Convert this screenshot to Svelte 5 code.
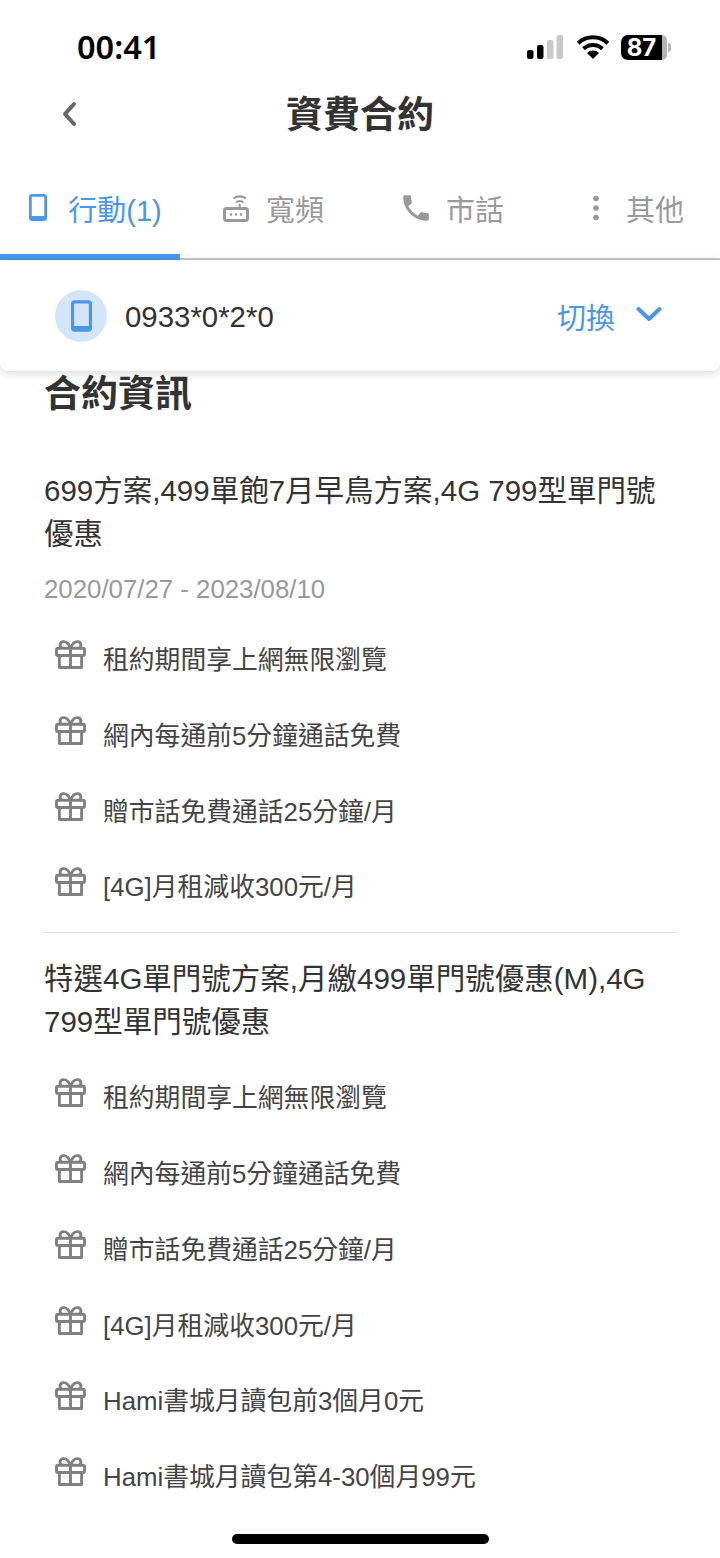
<script>
    const tabs = [
        { key: "mobile", label: "行動(1)", active: true },
        { key: "router", label: "寬頻" },
        { key: "phone", label: "市話" },
        { key: "more", label: "其他" },
    ];

    const base = ["租約期間享上網無限瀏覽", "網內每通前5分鐘通話免費", "贈市話免費通話25分鐘/月", "[4G]月租減收300元/月"];

    const plans = [
        {
            title: "699方案,499單飽7月早鳥方案,4G 799型單門號優惠",
            date: "2020/07/27 - 2023/08/10",
            perks: base,
        },
        {
            title: "特選4G單門號方案,月繳499單門號優惠(M),4G 799型單門號優惠",
            perks: [...base, "Hami書城月讀包前3個月0元", "Hami書城月讀包第4-30個月99元"],
        },
    ];
</script>

{#snippet handset(cls)}
    <svg class={cls} viewBox="0 0 20 30" aria-hidden="true">
        <rect x="1.5" y="1.5" width="17" height="27" rx="2" fill="none" stroke="currentColor" stroke-width="3" />
        <rect x="1.5" y="24.5" width="17" height="4" fill="currentColor" />
    </svg>
{/snippet}

<div class="page">
    <div class="status">
        <span class="time">00:41</span>
        <div class="status-icons">
            <svg class="signal" viewBox="0 0 36 24" aria-hidden="true">
                <rect x="0" y="15" width="6.5" height="9" rx="2" fill="#000" />
                <rect x="10" y="10" width="6.5" height="14" rx="2" fill="#000" />
                <rect x="20" y="5" width="6.5" height="19" rx="2" fill="#c9c9c9" />
                <rect x="29.5" y="0" width="6.5" height="24" rx="2" fill="#c9c9c9" />
            </svg>
            <svg class="wifi" viewBox="0 0 32 24" aria-hidden="true">
                <path d="M1.2 8.2a21.5 21.5 0 0 1 29.6 0" fill="none" stroke="#000" stroke-width="4" />
                <path d="M6.6 13.8a13.6 13.6 0 0 1 18.8 0" fill="none" stroke="#000" stroke-width="4" />
                <path d="M16 24l-6-6a8.500 8.500 0 0 1 12 0z" fill="#000" />
            </svg>
            <div class="battery">
                <span class="battery-level">87</span>
                <span class="battery-rest"></span>
                <span class="battery-cap"></span>
            </div>
        </div>
    </div>

    <header class="nav">
        <svg class="back" viewBox="0 0 16 26" aria-hidden="true">
            <path d="M13 3L4 13l9 10" fill="none" stroke="#666" stroke-width="4" stroke-linecap="round" stroke-linejoin="round" />
        </svg>
        <h1>資費合約</h1>
    </header>

    <nav class="tabs">
        {#each tabs as tab}
            <div class="tab" class:active={tab.active}>
                <span class="icon-box">
                    {#if tab.key === "mobile"}
                        {@render handset("mobile-icon")}
                    {:else if tab.key === "router"}
                        <svg class="router" viewBox="0 0 26 28" aria-hidden="true">
                            <path d="M13 8.500a5.500 5.500 0 0 1 7.500 0M10.500 4.500a10 10 0 0 1 12.500 0" fill="none" stroke="currentColor" stroke-width="2.200" />
                            <path d="M16.700 10v5" stroke="currentColor" stroke-width="2.200" />
                            <rect x="1.500" y="14.500" width="23" height="12" rx="2" fill="none" stroke="currentColor" stroke-width="3" />
                            <circle cx="8" cy="20.500" r="1.300" fill="currentColor" />
                            <circle cx="13" cy="20.500" r="1.300" fill="currentColor" />
                            <circle cx="18" cy="20.500" r="1.300" fill="currentColor" />
                        </svg>
                    {:else if tab.key === "phone"}
                        <svg class="phone" viewBox="0 0 24 24" aria-hidden="true">
                            <path fill="currentColor" d="M6.6 10.8c1.4 2.8 3.8 5.100 6.600 6.600l2.200-2.200c.3-.3.700-.4 1-.2 1.100.4 2.300.6 3.600.6.600 0 1 .4 1 1V20c0 .6-.4 1-1 1C10.600 21 3 13.400 3 4c0-.6.4-1 1-1h3.500c.6 0 1 .4 1 1 0 1.300.2 2.500.6 3.600.1.300 0 .7-.2 1z" />
                        </svg>
                    {:else}
                        <svg class="more" viewBox="0 0 8 28" aria-hidden="true">
                            <circle cx="4" cy="4.500" r="2.800" fill="currentColor" />
                            <circle cx="4" cy="14" r="2.800" fill="currentColor" />
                            <circle cx="4" cy="23.500" r="2.800" fill="currentColor" />
                        </svg>
                    {/if}
                </span>
                <span>{tab.label}</span>
            </div>
        {/each}
    </nav>

    <div class="switcher">
        <div class="avatar">{@render handset("avatar-icon")}</div>
        <span class="number">0933*0*2*0</span>
        <span class="switch-label">切換</span>
        <svg class="chevron" viewBox="0 0 26 16" aria-hidden="true">
            <path d="M2.500 3L13 13 23.500 3" fill="none" stroke="#4a96e8" stroke-width="4" stroke-linecap="round" stroke-linejoin="round" />
        </svg>
    </div>

    <main class="content">
        <h2>合約資訊</h2>
        {#each plans as plan, i}
            <section class="plan" class:rule={i > 0}>
                <p class="plan-title">{plan.title}</p>
                {#if plan.date}
                    <p class="plan-date">{plan.date}</p>
                {/if}
                <ul>
                    {#each plan.perks as perk}
                        <li>
                            <svg class="gift" viewBox="0 0 32 30" aria-hidden="true">
                                <g fill="none" stroke="#808080" stroke-width="3" stroke-linejoin="round">
                                    <path d="M16 8.500C14 3 11 1.500 8.500 1.700 5 2 4 6.500 7 8.500M16 8.500C18 3 21 1.500 23.500 1.700c3.500.3 4.500 4.800 1.500 6.800" />
                                    <rect x="1.500" y="8.500" width="29" height="7.500" rx="1.500" />
                                    <path d="M4.500 16V28.500H27.500V16M16 8.500V28.500" />
                                </g>
                            </svg>
                            <span>{perk}</span>
                        </li>
                    {/each}
                </ul>
            </section>
        {/each}
    </main>

    <div class="home-bar"></div>
</div>

<style>
    :global(body) {
        margin: 0;
        background: #fff;
    }
    .page {
        position: relative;
        width: 720px;
        height: 1558px;
        overflow: hidden;
        background: #fff;
        font-family: "Liberation Sans", "Noto Sans CJK TC", sans-serif;
        color: #333;
    }
    .status {
        height: 78px;
        display: flex;
        justify-content: space-between;
        align-items: center;
        padding: 16px 49px 0 77px;
        box-sizing: border-box;
    }
    .time {
        font-family: "Noto Sans", "Liberation Sans", sans-serif;
        font-size: 32.500px;
        font-weight: 600;
        color: #000;
        margin-bottom: 2px;
    }
    .status-icons {
        display: flex;
        align-items: center;
    }
    .signal {
        width: 36px;
        height: 24px;
        margin-right: 14px;
    }
    .wifi {
        width: 32px;
        height: 24px;
        margin-right: 12px;
    }
    .battery {
        display: flex;
        align-items: center;
        height: 25px;
    }
    .battery-level {
        width: 41px;
        height: 25px;
        line-height: 25px;
        background: #000;
        color: #fff;
        font-size: 24px;
        font-weight: 700;
        text-align: center;
        border-radius: 7px 0 0 7px;
        font-family: "Inter", sans-serif;
    }
    .battery-rest {
        width: 5px;
        height: 25px;
        background: #b4b4b4;
        border-radius: 0 7px 7px 0;
    }
    .battery-cap {
        width: 3px;
        height: 9px;
        margin-left: 1px;
        background: #b4b4b4;
        border-radius: 0 3px 3px 0;
    }
    .nav {
        position: relative;
        height: 74px;
        display: flex;
        align-items: center;
        justify-content: center;
    }
    .back {
        position: absolute;
        left: 61px;
        top: 23px;
        width: 16px;
        height: 26px;
    }
    h1 {
        margin: 0 0 6px;
        font-size: 37px;
        font-weight: 700;
        color: #333;
    }
    .tabs {
        margin-top: 28px;
        height: 80px;
        display: grid;
        grid-template-columns: repeat(4, 180px);
        border-bottom: 2px solid #c8c8c8;
        box-sizing: border-box;
    }
    .tab {
        position: relative;
        display: flex;
        align-items: center;
        justify-content: center;
        gap: 14px;
        height: 100%;
        padding: 0 0 23px 4px;
        box-sizing: border-box;
        font-size: 29px;
        color: #999;
    }
    .tab.active {
        color: #4a96e8;
    }
    .tab.active::after {
        content: "";
        position: absolute;
        left: 0;
        right: 0;
        bottom: -2px;
        height: 6px;
        background: #4a96e8;
    }
    .icon-box {
        width: 32px;
        display: flex;
        align-items: center;
        justify-content: center;
    }
    :global(.mobile-icon) {
        width: 18px;
        height: 27px;
    }
    .router {
        width: 26px;
        height: 28px;
    }
    .phone {
        width: 34px;
        height: 34px;
        flex: none;
    }
    .more {
        width: 8px;
        height: 28px;
    }
    .switcher {
        position: relative;
        z-index: 2;
        height: 111px;
        display: flex;
        align-items: center;
        padding: 0 58px 0 55px;
        background: #fff;
        border-radius: 0 0 8px 8px;
        box-shadow: 0 2px 10px rgba(0, 0, 0, 0.16);
    }
    .avatar {
        width: 52px;
        height: 52px;
        border-radius: 50%;
        background: #d3e5f9;
        color: #4a96e8;
        display: flex;
        align-items: center;
        justify-content: center;
    }
    :global(.avatar-icon) {
        width: 21px;
        height: 32px;
    }
    .number {
        margin: 2px 0 0 18px;
        flex: 1;
        font-size: 29.400px;
        color: #333;
    }
    .switch-label {
        font-size: 29px;
        color: #4a96e8;
    }
    .chevron {
        width: 26px;
        height: 16px;
        margin: 0 0 3px 21px;
    }
    .content {
        padding: 0 44px;
    }
    h2 {
        margin: 0;
        font-size: 37px;
        font-weight: 700;
        line-height: 48px;
        color: #333;
    }
    .plan {
        padding-top: 50px;
    }
    .plan.rule {
        margin-top: 19px;
        padding-top: 24px;
        border-top: 1px solid #ddd;
    }
    .plan-title {
        margin: 0;
        font-size: 29.500px;
        line-height: 43px;
        color: #333;
    }
    .plan-date {
        margin: 19px 0 6px;
        font-size: 25.800px;
        line-height: 30px;
        color: #999;
    }
    ul {
        list-style: none;
        margin: 5px 0 0;
        padding: 0;
    }
    li {
        display: flex;
        align-items: flex-start;
        height: 75.800px;
        padding-left: 11px;
        font-size: 25.800px;
        line-height: 32px;
        color: #444;
    }
    li span {
        padding-top: 34px;
    }
    .gift {
        width: 31px;
        height: 29px;
        margin: 30px 17px 0 0;
        flex: none;
    }
    .home-bar {
        position: absolute;
        left: 232px;
        bottom: 14px;
        width: 257px;
        height: 10px;
        border-radius: 5px;
        background: #000;
    }
</style>
